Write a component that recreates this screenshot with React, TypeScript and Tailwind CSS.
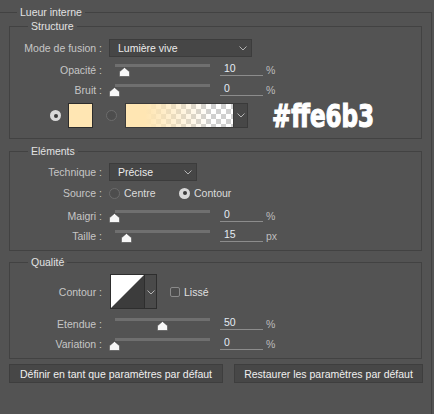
import React from "react";

const Chevron = () => (
  <svg width="8" height="5" viewBox="0 0 8 5" className="block">
    <polyline points="0.5,0.5 4,4 7.5,0.5" fill="none" stroke="#b4b4b4" strokeWidth="1" />
  </svg>
);

const Thumb = () => (
  <svg width="11" height="10" viewBox="0 0 11 10" className="block">
    <path
      d="M5.5 0.4 L10.6 4.8 V8.4 Q10.6 9.6 9.4 9.6 H1.6 Q0.4 9.6 0.4 8.4 V4.8 Z"
      fill="#f7f7f7"
      stroke="#3a3a3a"
      strokeWidth="0.6"
    />
  </svg>
);

const Label = ({ children }: { children: React.ReactNode }) => (
  <div className="w-[92px] shrink-0 text-right text-[#c6c6c6] whitespace-nowrap">{children}</div>
);

const SliderRow = ({
  label,
  value,
  unit,
  pos,
  className = "",
}: {
  label: string;
  value: string;
  unit: string;
  pos: number;
  className?: string;
}) => (
  <div className={`flex h-[20px] items-center ${className}`}>
    <Label>{label}</Label>
    <div className="relative ml-[7px] h-full w-[107px] shrink-0">
      <div className="absolute left-[6px] top-[4px] h-[3px] w-[95px] bg-[#6f6f6f]" />
      <div className="absolute top-[7px]" style={{ left: pos }}>
        <Thumb />
      </div>
    </div>
    <div className="ml-[4px] flex h-[16px] w-[43px] shrink-0 items-center self-start border-b border-[#8c8c8c] pl-[4px] pt-[1px] text-[#e4ecf4]">
      {value}
    </div>
    <div className="ml-[3px] text-[#bdbdbd]">{unit}</div>
  </div>
);

const Radio = ({ checked }: { checked?: boolean }) =>
  checked ? (
    <div className="flex h-[11px] w-[11px] shrink-0 items-center justify-center rounded-full bg-[#d9d9d9]">
      <div className="h-[4px] w-[4px] rounded-full bg-[#3a3a3a]" />
    </div>
  ) : (
    <div className="h-[11px] w-[11px] shrink-0 rounded-full border border-[#6c6c6c] bg-[#4d4d4d]" />
  );

const Legend = ({ children, className }: { children: React.ReactNode; className: string }) => (
  <legend className={`px-[3px] leading-[14px] text-[#e2e2e2] ${className}`}>{children}</legend>
);

export default function App() {
  return (
    <div
      className="relative h-[414px] w-[434px] overflow-hidden bg-[#535353] text-[10.5px] leading-[14px]"
      style={{ fontFamily: '"Liberation Sans", Arial, sans-serif' }}
    >
      <fieldset className="mt-[5px] h-[430px] w-[432px] border-t border-r border-[#424242]">
        <Legend className="ml-[17px]">Lueur interne</Legend>

        {/* Structure */}
        <fieldset className="ml-[9px] w-[413px] border border-[#424242] pb-[10px] pt-[5px]">
          <Legend className="ml-[18px]">Structure</Legend>
          <div className="flex h-[20px] items-center">
            <Label>Mode de fusion :</Label>
            <div className="ml-[7px] flex h-[18px] w-[143px] items-center justify-between border border-[#3c3c3c] bg-[#464646] pl-[8px] pr-[4px] text-[#ececec]">
              <span>Lumière vive</span>
              <Chevron />
            </div>
          </div>
          <SliderRow className="mt-[2px]" label="Opacité :" value="10" unit="%" pos={10} />
          <SliderRow label="Bruit :" value="0" unit="%" pos={0} />
          <div className="mt-[3px] flex h-[25px] items-center">
            <div className="ml-[40px]">
              <Radio checked />
            </div>
            <div className="ml-[7px] h-[25px] w-[25px] border border-[#2c2c2c] bg-[#ffe6b3]" />
            <div className="ml-[13px]">
              <Radio />
            </div>
            <div className="ml-[8px] flex h-[25px] border border-[#3a3a3a]">
              <div className="h-full w-[107px] bg-[image:repeating-conic-gradient(#cfcfcf_0%_25%,#ffffff_0%_50%)] bg-[length:10px_10px]">
                <div className="h-full w-full bg-[linear-gradient(to_right,#ffe6b3_18%,rgba(255,230,179,0)_80%)]" />
              </div>
              <div className="flex h-full w-[14px] items-center justify-center border-l border-[#3a3a3a] bg-[#474747]">
                <Chevron />
              </div>
            </div>
            <div
              className="ml-[24px] origin-left scale-x-[0.8] whitespace-nowrap text-[32px] font-bold leading-[32px] text-white [-webkit-text-stroke:1.2px_white]"
              style={{ fontFamily: '"DejaVu Sans", Impact, sans-serif', fontStretch: "condensed" }}
            >
              #ffe6b3
            </div>
          </div>
        </fieldset>

        {/* Eléments */}
        <fieldset className="ml-[9px] mt-[5px] w-[413px] border border-[#424242] pb-[4px] pt-[4px]">
          <Legend className="ml-[18px]">Eléments</Legend>
          <div className="flex h-[20px] items-center">
            <Label>Technique :</Label>
            <div className="ml-[7px] flex h-[18px] w-[88px] items-center justify-between border border-[#3c3c3c] bg-[#464646] pl-[8px] pr-[4px] text-[#ececec]">
              <span>Précise</span>
              <Chevron />
            </div>
          </div>
          <div className="mt-[1px] flex h-[20px] items-center">
            <Label>Source :</Label>
            <div className="ml-[7px] flex w-[70px] items-center">
              <Radio />
              <span className="ml-[4px] text-[#dcdcdc]">Centre</span>
            </div>
            <div className="flex items-center">
              <Radio checked />
              <span className="ml-[4px] text-[#dcdcdc]">Contour</span>
            </div>
          </div>
          <SliderRow className="mt-[3px]" label="Maigri :" value="0" unit="%" pos={0} />
          <SliderRow label="Taille :" value="15" unit="px" pos={12} />
        </fieldset>

        {/* Qualité */}
        <fieldset className="ml-[9px] mt-[4px] w-[413px] border border-[#424242] pb-[4px] pt-[4px]">
          <Legend className="ml-[18px]">Qualité</Legend>
          <div className="flex h-[37px] items-center">
            <Label>Contour :</Label>
            <div className="ml-[8px] flex h-[35px] border border-[#2e2e2e]">
              <svg width="33" height="33" viewBox="0 0 33 33" className="block">
                <rect width="33" height="33" fill="#3c3c3c" />
                <polygon points="0,0 33,0 0,33" fill="#ffffff" />
              </svg>
              <div className="flex h-full w-[12px] items-center justify-center border-l border-[#2e2e2e] bg-[#4a4a4a] pt-[2px]">
                <Chevron />
              </div>
            </div>
            <div className="ml-[13px] h-[10px] w-[10px] rounded-[2px] border border-[#8a8a8a] bg-[#4d4d4d]" />
            <span className="ml-[4px] text-[#e0e0e0]">Lissé</span>
          </div>
          <SliderRow className="mt-[4px]" label="Etendue :" value="50" unit="%" pos={48} />
          <SliderRow label="Variation :" value="0" unit="%" pos={0} />
        </fieldset>

        <div className="ml-[9px] mt-[5px] flex gap-[11px]">
          <button className="h-[19px] w-[214px] border border-[#3e3e3e] bg-[#474747] text-[#f0f0f0]">
            Définir en tant que paramètres par défaut
          </button>
          <button className="h-[19px] w-[189px] border border-[#3e3e3e] bg-[#474747] text-[#f0f0f0]">
            Restaurer les paramètres par défaut
          </button>
        </div>
      </fieldset>
    </div>
  );
}
